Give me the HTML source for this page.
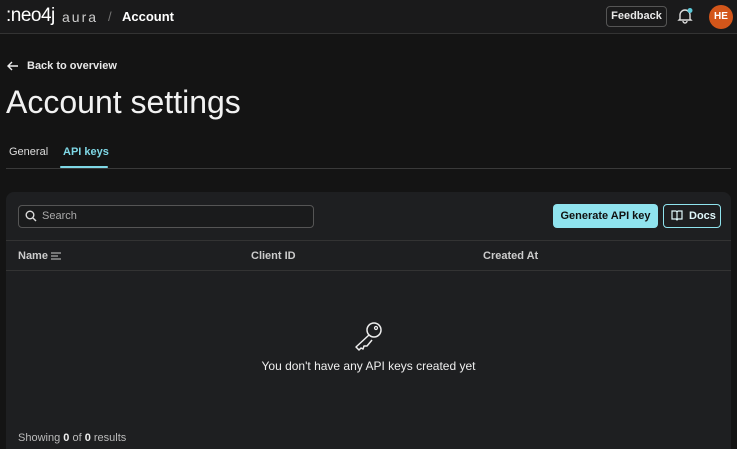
<!DOCTYPE html>
<html style="width:737px;height:449px;overflow:hidden"><head><style>
*{box-sizing:border-box;margin:0;padding:0}
body{width:737px;height:449px;background:#141414;color:#e8e8e8;font-family:"Liberation Sans",sans-serif;position:relative;overflow:hidden}
.a{position:absolute;white-space:nowrap}
</style></head><body>
<div class="a" style="left:0;top:0;width:737px;height:34px;background:#1a1a1b;border-bottom:1px solid #333"></div>
<div class="a" style="left:6px;top:5px;font-size:19px;color:#fff;letter-spacing:-0.5px">:neo4j</div>
<div class="a" style="left:62px;top:9px;font-size:14px;color:#ccc;letter-spacing:2px">aura</div>
<div class="a" style="left:108px;top:9px;font-size:13px;color:#777">/</div>
<div class="a" style="left:122px;top:9px;font-size:13px;font-weight:bold;color:#fff">Account</div>
<div class="a" style="left:606px;top:6px;width:61px;height:21px;border:1px solid #555;border-radius:4px;font-size:11px;font-weight:bold;text-align:center;line-height:19px">Feedback</div>
<svg class="a" style="left:676px;top:7px" width="18" height="18" viewBox="0 0 18 18"><path d="M4 12V8a5 5 0 0 1 10 0v4l1 1H3z M7 14a2 2 0 0 0 4 0" fill="none" stroke="#ddd" stroke-width="1.4"/><circle cx="14" cy="3.5" r="2.5" fill="#5ac8d8"/></svg>
<div class="a" style="left:709px;top:5px;width:24px;height:24px;border-radius:50%;background:#d3561a;color:#fff;font-size:10px;font-weight:bold;text-align:center;line-height:24px">HE</div>
<svg class="a" style="left:7px;top:60px" width="12" height="12" viewBox="0 0 12 12"><path d="M11 6H1M5 2L1 6l4 4" fill="none" stroke="#eee" stroke-width="1.4"/></svg>
<div class="a" style="left:27px;top:60px;font-size:11px;font-weight:bold">Back to overview</div>
<div class="a" style="left:6px;top:84px;font-size:32px;color:#f2f2f2">Account settings</div>
<div class="a" style="left:9px;top:146px;font-size:11px;color:#ddd">General</div>
<div class="a" style="left:63px;top:146px;font-size:11px;color:#7fd8e6;font-weight:bold">API keys</div>
<div class="a" style="left:6px;top:168px;width:725px;height:1px;background:#3a3a3a"></div>
<div class="a" style="left:60px;top:166px;width:48px;height:2px;background:#7fd8e6;border-radius:1px"></div>
<div class="a" style="left:6px;top:192px;width:725px;height:270px;background:#1e1f21;border-radius:8px"></div>
<div class="a" style="left:18px;top:205px;width:296px;height:23px;border:1px solid #555;border-radius:4px;background:#1a1b1c"></div>
<svg class="a" style="left:25px;top:210px" width="12" height="12" viewBox="0 0 12 12"><circle cx="5" cy="5" r="3.8" fill="none" stroke="#ddd" stroke-width="1.4"/><path d="M8 8l3 3" stroke="#ddd" stroke-width="1.4"/></svg>
<div class="a" style="left:42px;top:210px;font-size:11px;color:#aaa">Search</div>
<div class="a" style="left:553px;top:204px;width:105px;height:24px;background:#8fe3ee;border-radius:4px;color:#111;font-size:11px;font-weight:bold;text-align:center;line-height:25px">Generate API key</div>
<div class="a" style="left:663px;top:204px;width:58px;height:24px;border:1px solid #8fe3ee;border-radius:4px;color:#e0f8fb;font-size:11px;font-weight:bold;line-height:23px;padding-left:25px">Docs</div>
<svg class="a" style="left:671px;top:210px" width="12" height="11" viewBox="0 0 12 11"><path d="M1 1h4l1 1 1-1h4v8H7l-1 1-1-1H1z M6 2v8" fill="none" stroke="#e0f8fb" stroke-width="1.2"/></svg>
<div class="a" style="left:6px;top:240px;width:725px;height:1px;background:#333"></div>
<div class="a" style="left:18px;top:250px;font-size:11px;font-weight:bold;color:#ccc">Name</div>
<svg class="a" style="left:51px;top:252px" width="10" height="8"><path d="M0 1h10M0 4h7M0 7h10" stroke="#ccc" stroke-width="1"/></svg>
<div class="a" style="left:251px;top:250px;font-size:11px;font-weight:bold;color:#ccc">Client ID</div>
<div class="a" style="left:483px;top:250px;font-size:11px;font-weight:bold;color:#ccc">Created At</div>
<div class="a" style="left:6px;top:270px;width:725px;height:1px;background:#333"></div>
<svg class="a" style="left:352px;top:320px" width="34" height="32" viewBox="0 0 34 32"><circle cx="22" cy="10" r="7" fill="none" stroke="#eee" stroke-width="1.5"/><circle cx="24" cy="8" r="1.5" fill="none" stroke="#eee" stroke-width="1.2"/><path d="M17 15L4 27l3 3 2-2 2 1 1-3 3 0 5-6" fill="none" stroke="#eee" stroke-width="1.5" stroke-linejoin="round"/></svg>
<div class="a" style="left:0;width:737px;text-align:center;top:359px;font-size:12px;color:#eee">You don't have any API keys created yet</div>
<div class="a" style="left:18px;top:432px;font-size:11px;color:#bbb">Showing <b style="color:#eee">0</b> of <b style="color:#eee">0</b> results</div>
</body></html>
